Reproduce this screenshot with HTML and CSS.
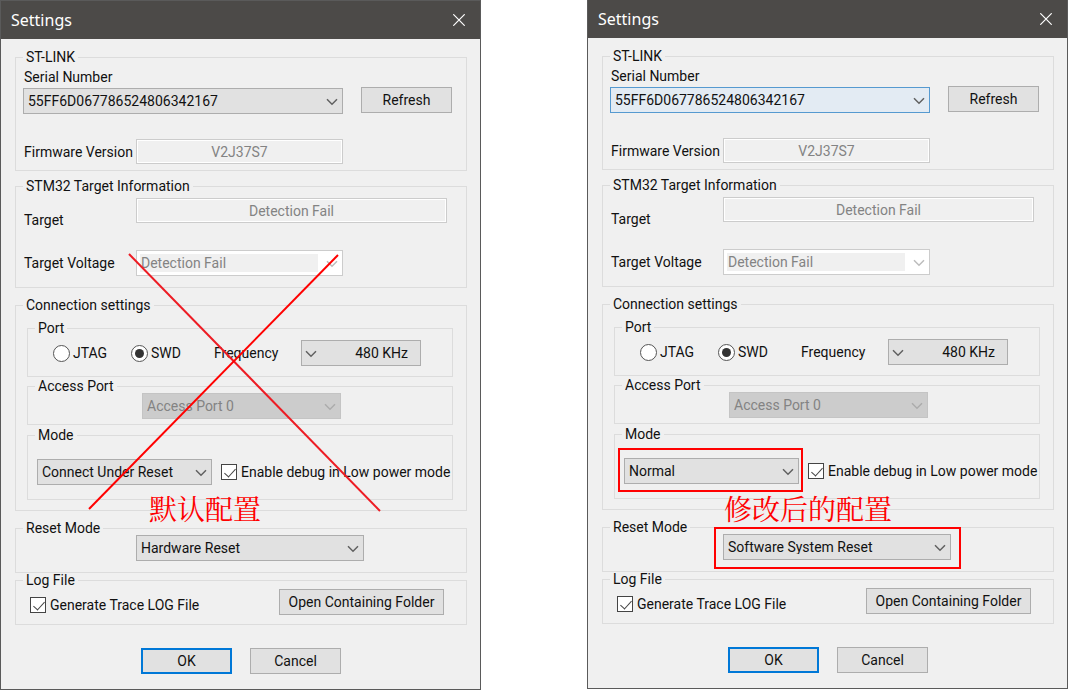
FILE: index.html
```html
<!DOCTYPE html>
<html lang="en">
<head>
<meta charset="utf-8">
<title>Settings</title>
<link rel="stylesheet" href="styles.css">
</head>
<body>
<svg class="defs" aria-hidden="true">
  <symbol id="chevron" viewBox="0 0 12 8"><path d="M1 1.2 L6 6.2 L11 1.2" fill="none" stroke="currentColor" stroke-width="1.5"/></symbol>
  <symbol id="close" viewBox="0 0 12 12"><path d="M0.3 0.3 L11.7 11.7 M11.7 0.3 L0.3 11.7" fill="none" stroke="currentColor" stroke-width="1.2"/></symbol>
</svg>
<main class="compare">
  <form class="dialog">
    <header class="titlebar">
      <h1 class="title">Settings</h1>
      <button class="close" type="button" aria-label="Close"><svg><use href="#close"/></svg></button>
    </header>
    <div class="content">
      <fieldset class="group stlink">
        <legend>ST-LINK</legend>
        <label class="text" for="serial-a">Serial Number</label>
        <div class="row serial">
          <div class="combo"><select id="serial-a"><option>55FF6D067786524806342167</option></select><svg><use href="#chevron"/></svg></div>
          <button class="button" type="button">Refresh</button>
        </div>
        <div class="row firmware">
          <label class="text name" for="fw-a">Firmware Version</label>
          <input class="field short" id="fw-a" value="V2J37S7" disabled>
        </div>
      </fieldset>
      <fieldset class="group target">
        <legend>STM32 Target Information</legend>
        <div class="row device">
          <label class="text name" for="target-a">Target</label>
          <input class="field long" id="target-a" value="Detection Fail" disabled>
        </div>
        <div class="row">
          <label class="text name" for="volt-a">Target Voltage</label>
          <div class="combo voltage"><select id="volt-a" disabled><option>Detection Fail</option></select><svg><use href="#chevron"/></svg></div>
        </div>
      </fieldset>
      <fieldset class="group connection">
        <legend>Connection settings</legend>
        <fieldset class="group port">
          <legend>Port</legend>
          <div class="row">
            <label class="choice jtag"><input type="radio" name="port-a">JTAG</label>
            <label class="choice swd"><input type="radio" name="port-a" checked>SWD</label>
            <label class="text freq-name" for="freq-a">Frequency</label>
            <div class="combo freq"><select id="freq-a"><option>480 KHz</option></select><svg><use href="#chevron"/></svg></div>
          </div>
        </fieldset>
        <fieldset class="group access">
          <legend>Access Port</legend>
          <div class="combo ap"><select aria-label="Access Port" disabled><option>Access Port 0</option></select><svg><use href="#chevron"/></svg></div>
        </fieldset>
        <fieldset class="group mode">
          <legend>Mode</legend>
          <div class="row">
            <div class="combo connect"><select aria-label="Mode"><option>Connect Under Reset</option></select><svg><use href="#chevron"/></svg></div>
            <label class="choice"><input type="checkbox" checked>Enable debug in Low power mode</label>
          </div>
        </fieldset>
      </fieldset>
      <fieldset class="group reset">
        <legend>Reset Mode</legend>
        <div class="combo kind"><select aria-label="Reset Mode"><option>Hardware Reset</option></select><svg><use href="#chevron"/></svg></div>
      </fieldset>
      <fieldset class="group log">
        <legend>Log File</legend>
        <div class="row">
          <label class="choice"><input type="checkbox" checked>Generate Trace LOG File</label>
          <button class="button folder" type="button">Open Containing Folder</button>
        </div>
      </fieldset>
    </div>
    <footer class="actions">
      <button class="button primary" type="button">OK</button>
      <button class="button" type="button">Cancel</button>
    </footer>
    <svg class="cross" viewBox="0 0 294 260" aria-hidden="true">
      <path d="M41 1 L292 258" stroke="#ed1c24"/>
      <path d="M250 2 L1 256" stroke="#ff0000"/>
    </svg>
    <p class="note before" lang="zh-CN">默认配置</p>
  </form>

  <form class="dialog raised">
    <header class="titlebar">
      <h1 class="title">Settings</h1>
      <button class="close" type="button" aria-label="Close"><svg><use href="#close"/></svg></button>
    </header>
    <div class="content">
      <fieldset class="group stlink">
        <legend>ST-LINK</legend>
        <label class="text" for="serial-b">Serial Number</label>
        <div class="row serial">
          <div class="combo active"><select id="serial-b"><option>55FF6D067786524806342167</option></select><svg><use href="#chevron"/></svg></div>
          <button class="button" type="button">Refresh</button>
        </div>
        <div class="row firmware">
          <label class="text name" for="fw-b">Firmware Version</label>
          <input class="field short" id="fw-b" value="V2J37S7" disabled>
        </div>
      </fieldset>
      <fieldset class="group target">
        <legend>STM32 Target Information</legend>
        <div class="row device">
          <label class="text name" for="target-b">Target</label>
          <input class="field long" id="target-b" value="Detection Fail" disabled>
        </div>
        <div class="row">
          <label class="text name" for="volt-b">Target Voltage</label>
          <div class="combo voltage"><select id="volt-b" disabled><option>Detection Fail</option></select><svg><use href="#chevron"/></svg></div>
        </div>
      </fieldset>
      <fieldset class="group connection">
        <legend>Connection settings</legend>
        <fieldset class="group port">
          <legend>Port</legend>
          <div class="row">
            <label class="choice jtag"><input type="radio" name="port-b">JTAG</label>
            <label class="choice swd"><input type="radio" name="port-b" checked>SWD</label>
            <label class="text freq-name" for="freq-b">Frequency</label>
            <div class="combo freq"><select id="freq-b"><option>480 KHz</option></select><svg><use href="#chevron"/></svg></div>
          </div>
        </fieldset>
        <fieldset class="group access">
          <legend>Access Port</legend>
          <div class="combo ap"><select aria-label="Access Port" disabled><option>Access Port 0</option></select><svg><use href="#chevron"/></svg></div>
        </fieldset>
        <fieldset class="group mode">
          <legend>Mode</legend>
          <div class="row">
            <div class="combo connect marked"><select aria-label="Mode"><option>Normal</option></select><svg><use href="#chevron"/></svg></div>
            <label class="choice"><input type="checkbox" checked>Enable debug in Low power mode</label>
          </div>
        </fieldset>
      </fieldset>
      <fieldset class="group reset">
        <legend>Reset Mode</legend>
        <div class="combo kind marked"><select aria-label="Reset Mode"><option>Software System Reset</option></select><svg><use href="#chevron"/></svg></div>
      </fieldset>
      <fieldset class="group log">
        <legend>Log File</legend>
        <div class="row">
          <label class="choice"><input type="checkbox" checked>Generate Trace LOG File</label>
          <button class="button folder" type="button">Open Containing Folder</button>
        </div>
      </fieldset>
    </div>
    <footer class="actions">
      <button class="button primary" type="button">OK</button>
      <button class="button" type="button">Cancel</button>
    </footer>
    <p class="note after" lang="zh-CN">修改后的配置</p>
  </form>
</main>
</body>
</html>
```

FILE: styles.css
```css
* { box-sizing: border-box; }

body {
  margin: 0;
  background: #fff;
  color: #111;
  font: 14px/14px Roboto, "Liberation Sans", sans-serif;
}

.defs { position: absolute; width: 0; height: 0; }

.compare {
  display: grid;
  grid-template-columns: 1fr 1fr;
  gap: 106px;
  align-items: start;
  padding-right: 1px;
}

.dialog {
  position: relative;
  min-width: 0;
  border: 1px solid #5a5a5a;
  background: #f0f0f0;
}
.raised { margin-top: -1px; }

.titlebar {
  display: flex;
  align-items: center;
  justify-content: space-between;
  height: 38px;
  padding: 0 15px 0 10px;
  background: #4c4a48;
  color: #fff;
}
.title { margin: 0; font: 16px/20px "Noto Sans", sans-serif; }
.close { display: flex; padding: 0; border: 0; background: none; color: #fff; }
.close svg { width: 12px; height: 12px; }

.content { padding: 11px 13px 0 14px; }

.group {
  min-width: 0;
  margin: 0;
  padding: 0 7px;
  border: 1px solid #dcdcdc;
}
.group legend { padding: 0 3px; }

.text { display: block; padding-left: 1px; }
.name { flex: 0 0 113px; }
.row { display: flex; align-items: center; }

.stlink { padding-top: 6px; padding-bottom: 6px; }
.serial { gap: 18px; margin: 3px 7px 25px 0; align-items: flex-start; }
.serial .combo { flex: 1; margin-top: 1px; }

.target { margin-top: 8px; padding-top: 5px; padding-bottom: 11px; }
.device { height: 29px; margin-bottom: 23px; align-items: flex-end; }
.device .field { align-self: flex-start; }

.connection { margin-top: 10px; padding: 9px 13px 10px 11px; }
.connection > legend { margin-left: -4px; }
.port { padding-top: 5px; padding-bottom: 10px; }
.access { margin-top: 2px; padding-bottom: 5px; }
.mode { margin-top: 3px; padding: 17px 0 14px 7px; }
.reset { margin-top: 10px; padding-bottom: 11px; }
.log { padding-top: 2px; padding-bottom: 9px; }
.log .row { justify-content: space-between; padding: 0 15px 0 7px; }
.log .choice { padding-top: 5px; }

.field {
  height: 25px;
  padding: 0;
  border: 1px solid #ccc;
  background: #f0f0f0;
  box-shadow: inset 0 0 0 1px #fff;
  color: #838383;
  font: inherit;
  text-align: center;
}
.short { width: 207px; }
.long { flex: 1; min-width: 0; margin-right: 12px; }

.combo { position: relative; height: 26px; color: #606060; }
.combo select {
  appearance: none;
  display: block;
  width: 100%;
  height: 100%;
  padding: 0 24px 0 4px;
  border: 1px solid #adadad;
  border-radius: 0;
  background: #e1e1e1;
  color: #111;
  font: inherit;
  opacity: 1;
}
.combo svg {
  position: absolute;
  top: 10px;
  right: 5px;
  width: 12px;
  height: 8px;
  pointer-events: none;
}
.active select { border-color: #569ad0; background: #e3ebf3; }
.voltage { width: 207px; color: #bcbcbc; }
.voltage select {
  border-color: #ccc;
  background: linear-gradient(#f0f0f0, #f0f0f0) 3px 3px / calc(100% - 27px) calc(100% - 6px) no-repeat #fff;
  color: #838383;
}
.freq { width: 120px; }
.freq select { padding: 0 12px 0 24px; text-align-last: right; }
.freq svg { right: auto; left: 4px; }
.ap { width: 199px; margin-left: 107px; color: #acacac; }
.ap select { border-color: #c4c4c4; background: #ccc; color: #838383; }
.connect { flex: none; width: 175px; margin: 0 9px 0 2px; }
.kind { width: 228px; margin-left: 113px; }

.marked::after {
  content: "";
  position: absolute;
  inset: -10px -4px -8px -6px;
  border: 2px solid #f00;
  pointer-events: none;
}
.kind.marked::after { inset: -7px -10px -9px -9px; }

.choice { display: flex; align-items: center; white-space: nowrap; gap: 4px; }
.choice input {
  appearance: none;
  position: relative;
  flex: none;
  width: 16px;
  height: 16px;
  margin: 0;
  border: 1px solid #444;
  background: #fff;
}
.choice input[type="radio"] { width: 17px; height: 17px; border-color: #555; border-radius: 50%; }
.choice input[type="radio"]:checked::after {
  content: "";
  position: absolute;
  inset: 3px;
  border-radius: 50%;
  background: #333;
}
.choice input[type="checkbox"]:checked::after {
  content: "";
  position: absolute;
  top: 1px;
  left: 5px;
  width: 5px;
  height: 10px;
  border: solid #444;
  border-width: 0 1px 1px 0;
  transform: rotate(42deg);
}
.jtag { width: 78px; margin-left: 18px; }
.swd { width: 83px; }
.freq-name { width: 87px; padding: 0; }
.jtag, .swd { gap: 3px; }

.button {
  width: 91px;
  height: 26px;
  padding: 0;
  border: 1px solid #adadad;
  background: #e1e1e1;
  color: #111;
  font: inherit;
}
.folder { width: 165px; }
.primary { border: 2px solid #0078d7; }
.actions { display: flex; justify-content: center; gap: 18px; padding: 23px 0 15px 1px; }

/* Red annotations drawn over the dialogs */
.cross {
  position: absolute;
  top: 252px;
  left: 87px;
  width: 294px;
  height: 260px;
  fill: none;
  stroke-width: 2;
  pointer-events: none;
}
.note {
  position: absolute;
  margin: 0;
  color: #f00;
  font: 28px/30px "Noto Serif CJK SC", "Noto Sans CJK SC", serif;
  white-space: nowrap;
}
.before { top: 492px; left: 148px; }
.after { top: 493px; left: 136px; }
```
